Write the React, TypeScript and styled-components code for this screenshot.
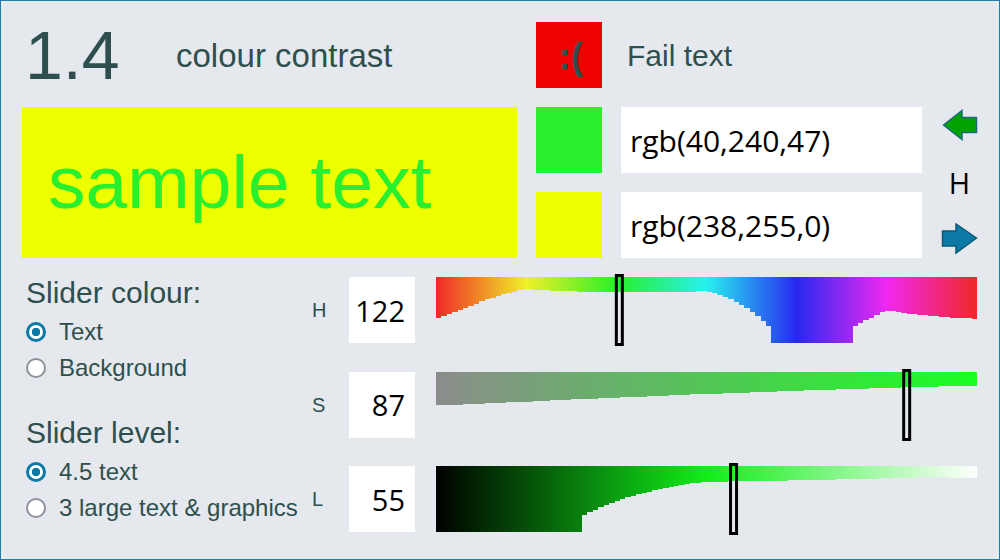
import React from "react";
import styled, { createGlobalStyle } from "styled-components";

type RGB = [number, number, number];

const INK = "#2f4f4f";
const ACCENT = "#0b7aa6";
const BACKGROUND: RGB = [238, 255, 0];
const HUE = 122;
const SAT = 87;
const LIGHT = 55;
const LEVEL = 4.5;

const BAR_W = 541;
const BAR_H = 66;
const SEGMENTS = 100;

const hslToRgb = (h: number, s: number, l: number): RGB => {
  const sat = s / 100;
  const lig = l / 100;
  const a = sat * Math.min(lig, 1 - lig);
  const f = (n: number) => {
    const k = (n + h / 30) % 12;
    return lig - a * Math.max(-1, Math.min(k - 3, Math.min(9 - k, 1)));
  };
  return [f(0), f(8), f(4)].map((v) => Math.round(v * 255)) as RGB;
};

const channel = (v: number) => {
  const c = v / 255;
  return c <= 0.03928 ? c / 12.92 : Math.pow((c + 0.055) / 1.055, 2.4);
};

const luminance = ([r, g, b]: RGB) =>
  0.2126 * channel(r) + 0.7152 * channel(g) + 0.0722 * channel(b);

const contrast = (a: RGB, b: RGB) => {
  const la = luminance(a);
  const lb = luminance(b);
  return (Math.max(la, lb) + 0.05) / (Math.min(la, lb) + 0.05);
};

const css = ([r, g, b]: RGB) => `rgb(${r},${g},${b})`;

const GlobalStyle = createGlobalStyle`
  html, body {
    margin: 0;
    padding: 0;
    background: #e5e9ee;
  }
`;

const Panel = styled.main`
  width: 1000px;
  height: 560px;
  box-sizing: border-box;
  border: 1px solid #1b7ea6;
  background: #e5e9ee;
  padding: 21px 21px 0;
  font-family: "Liberation Sans", Arial, sans-serif;
  color: ${INK};
`;

const TopGrid = styled.section`
  display: grid;
  grid-template-columns: 495px 66px 301px 37px;
  grid-template-rows: 66px 66px 66px;
  column-gap: 19px;
  row-gap: 19px;
`;

const ScoreCell = styled.div`
  grid-column: 1;
  grid-row: 1;
  display: flex;
  align-items: center;
  padding-left: 3px;
`;

const Ratio = styled.span`
  font-size: 68px;
  line-height: 1;
  width: 151px;
`;

const Title = styled.span`
  font-size: 33px;
  line-height: 1;
`;

const Swatch = styled.div<{ $bg: string; $row: number }>`
  grid-column: 2;
  grid-row: ${(p) => p.$row};
  background: ${(p) => p.$bg};
  display: flex;
  align-items: center;
  justify-content: center;
`;

const Sad = styled.span`
  font-size: 36px;
  font-weight: bold;
  line-height: 1;
  padding: 4px 0 0 4px;
  color: ${INK};
`;

const Verdict = styled.div`
  grid-column: 3 / span 2;
  grid-row: 1;
  display: flex;
  align-items: center;
  padding: 2px 0 0 6px;
  font-size: 30px;
  line-height: 1;
`;

const Sample = styled.div<{ $fg: string; $bg: string }>`
  grid-column: 1;
  grid-row: 2 / span 2;
  display: flex;
  align-items: center;
  padding-left: 26px;
  background: ${(p) => p.$bg};
  color: ${(p) => p.$fg};
  font-size: 75px;
  line-height: 1;
`;

const ColourField = styled.input<{ $row: number }>`
  grid-column: 3;
  grid-row: ${(p) => p.$row};
  width: 100%;
  height: 66px;
  box-sizing: border-box;
  margin: 0;
  border: none;
  outline: none;
  padding: 0 9px;
  background: #fff;
  color: #000;
  font-family: "Open Sans", sans-serif;
  font-size: 30px;
`;

const Arrows = styled.div`
  grid-column: 4;
  grid-row: 2 / span 2;
  display: flex;
  flex-direction: column;
  align-items: center;
  justify-content: space-between;
  padding: 2px 0 3px;
`;

const SwapLabel = styled.span`
  font-family: "Open Sans", sans-serif;
  font-size: 29px;
  line-height: 1;
  color: #000;
`;

const ArrowIcon = styled.svg`
  display: block;
`;

const Bottom = styled.section`
  display: flex;
  margin-top: 19px;
`;

const Options = styled.div`
  width: 286px;
  padding-left: 4px;
  display: flex;
  flex-direction: column;
`;

const OptionHeading = styled.h2<{ $gap: number }>`
  margin: ${(p) => p.$gap}px 0 0;
  font-size: 30px;
  font-weight: normal;
  line-height: 32px;
`;

const RadioList = styled.div`
  display: flex;
  flex-direction: column;
  margin-top: 5px;
`;

const RadioRow = styled.label`
  display: flex;
  align-items: center;
  gap: 13px;
  height: 36px;
  font-size: 24px;
  white-space: nowrap;
`;

const Radio = styled.input`
  appearance: none;
  margin: 0;
  width: 20px;
  height: 20px;
  box-sizing: border-box;
  border-radius: 50%;
  border: 2px solid #8f8f9d;
  background: #fff;
  &:checked {
    border: 3px solid ${ACCENT};
    background: radial-gradient(circle, ${ACCENT} 0 4px, #fff 4.5px);
  }
`;

const SliderGrid = styled.div`
  display: grid;
  grid-template-columns: 16px 66px ${BAR_W}px;
  grid-auto-rows: 66px;
  column-gap: 21px;
  row-gap: 28.5px;
  align-items: center;
`;

const AxisLabel = styled.span`
  font-size: 20px;
  line-height: 1;
`;

const ValueBox = styled.input`
  width: 66px;
  height: 66px;
  box-sizing: border-box;
  margin: 0;
  border: none;
  outline: none;
  padding: 0 10px 0 0;
  background: #fff;
  color: #000;
  text-align: right;
  font-family: "Open Sans", sans-serif;
  font-size: 29px;
`;

const Chart = styled.svg`
  display: block;
  margin: -3px 0;
  overflow: visible;
`;

type SliderProps = {
  id: string;
  position: number;
  colourAt: (t: number) => RGB;
};

const SliderChart = ({ id, position, colourAt }: SliderProps) => {
  const step = BAR_W / SEGMENTS;
  const heights = Array.from({ length: SEGMENTS }, (_, i) => {
    const c = contrast(colourAt((i + 0.5) / SEGMENTS), BACKGROUND);
    return c >= LEVEL ? BAR_H : Math.min(BAR_H, Math.round(c * 11.1));
  });
  let d = `M0,0 H${BAR_W}`;
  for (let i = SEGMENTS - 1; i >= 0; i--) {
    d += ` V${heights[i]} H${(i * step).toFixed(2)}`;
  }
  d += " Z";
  const stops = Array.from({ length: 37 }, (_, i) => i / 36);
  const x = position * BAR_W;

  return (
    <Chart width={BAR_W} height={72} viewBox={`0 -3 ${BAR_W} 72`}>
      <defs>
        <linearGradient id={id} gradientUnits="userSpaceOnUse" x1="0" y1="0" x2={BAR_W} y2="0">
          {stops.map((t) => (
            <stop key={t} offset={t} stopColor={css(colourAt(t))} />
          ))}
        </linearGradient>
      </defs>
      <path d={d} fill={`url(#${id})`} shapeRendering="crispEdges" />
      <rect x={x - 3} y={-1.5} width={6} height={69} fill="none" stroke="#000" strokeWidth={3} />
    </Chart>
  );
};

const sliders = [
  { key: "H", value: HUE, position: HUE / 360, colourAt: (t: number) => hslToRgb(t * 360, SAT, LIGHT) },
  { key: "S", value: SAT, position: SAT / 100, colourAt: (t: number) => hslToRgb(HUE, t * 100, LIGHT) },
  { key: "L", value: LIGHT, position: LIGHT / 100, colourAt: (t: number) => hslToRgb(HUE, SAT, t * 100) },
];

const App = () => {
  const fg = hslToRgb(HUE, SAT, LIGHT);
  const ratio = contrast(fg, BACKGROUND);

  return (
    <>
      <GlobalStyle />
      <Panel>
        <TopGrid>
          <ScoreCell>
            <Ratio>{ratio.toFixed(1)}</Ratio>
            <Title>colour contrast</Title>
          </ScoreCell>
          <Swatch $bg="#f00000" $row={1}>
            <Sad>:(</Sad>
          </Swatch>
          <Verdict>Fail text</Verdict>
          <Sample $fg={css(fg)} $bg={css(BACKGROUND)}>
            sample text
          </Sample>
          <Swatch $bg={css(fg)} $row={2} />
          <ColourField $row={2} defaultValue={css(fg)} />
          <Arrows>
            <ArrowIcon width="36" height="32" viewBox="0 0 36 32">
              <path d="M1.5,16 L20,1.5 V8.5 H34.5 V23.5 H20 V30.5 Z" fill="#00a300" stroke="#1d6a7c" strokeWidth="1.5" />
            </ArrowIcon>
            <SwapLabel>H</SwapLabel>
            <ArrowIcon width="37" height="32" viewBox="0 0 37 32">
              <path d="M35.5,15 L15,1 V8 H1.5 V23 H15 V30 Z" fill="#0b7aa6" stroke="#0d5876" strokeWidth="1.5" />
            </ArrowIcon>
          </Arrows>
          <Swatch $bg={css(BACKGROUND)} $row={3} />
          <ColourField $row={3} defaultValue={css(BACKGROUND)} />
        </TopGrid>

        <Bottom>
          <Options>
            <OptionHeading $gap={0}>Slider colour:</OptionHeading>
            <RadioList>
              <RadioRow>
                <Radio type="radio" name="target" defaultChecked />
                Text
              </RadioRow>
              <RadioRow>
                <Radio type="radio" name="target" />
                Background
              </RadioRow>
            </RadioList>
            <OptionHeading $gap={31}>Slider level:</OptionHeading>
            <RadioList>
              <RadioRow>
                <Radio type="radio" name="level" defaultChecked />
                4.5 text
              </RadioRow>
              <RadioRow>
                <Radio type="radio" name="level" />3 large text &amp; graphics
              </RadioRow>
            </RadioList>
          </Options>

          <SliderGrid>
            {sliders.map((s) => (
              <React.Fragment key={s.key}>
                <AxisLabel>{s.key}</AxisLabel>
                <ValueBox defaultValue={s.value} />
                <SliderChart id={`bar-${s.key}`} position={s.position} colourAt={s.colourAt} />
              </React.Fragment>
            ))}
          </SliderGrid>
        </Bottom>
      </Panel>
    </>
  );
};

export default App;
